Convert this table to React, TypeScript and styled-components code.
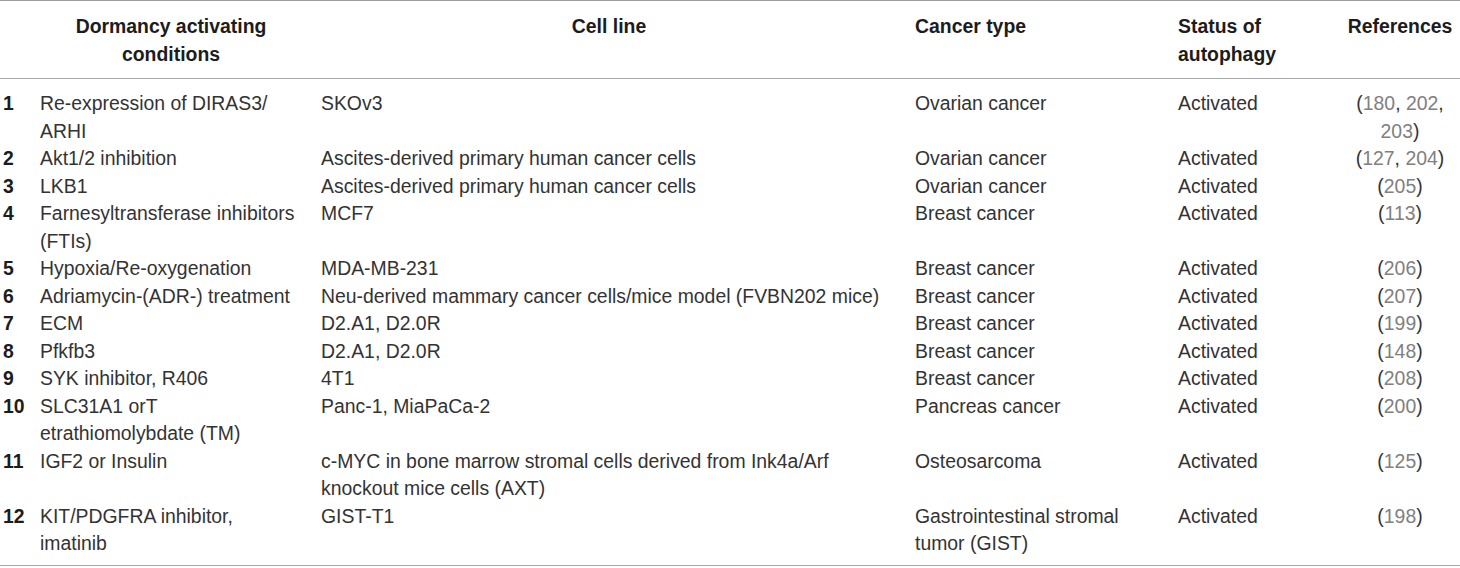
import React from "react";
import styled, { createGlobalStyle } from "styled-components";

const Global = createGlobalStyle`
  html, body { margin: 0; padding: 0; background: #ffffff; }
  body { font-family: "Liberation Sans", Arial, sans-serif; }
`;

const Table = styled.table`
  width: 1460px;
  border-collapse: collapse;
  table-layout: fixed;
  font-family: "Liberation Sans", Arial, sans-serif;
  font-size: 19.4px;
  line-height: 27.5px;
  color: #333333;
  border-top: 1px solid #9c9c9c;
  border-bottom: 1.5px solid #a8a8a8;
`;

const Head = styled.thead`
  border-bottom: 1.5px solid #a8a8a8;
`;

type Align = "left" | "center";

const Th = styled.th<{ $align?: Align; $pl?: number; $pr?: number }>`
  font-weight: 700;
  color: #1c1c1c;
  vertical-align: top;
  text-align: ${(p) => p.$align ?? "left"};
  padding: 12px ${(p) => p.$pr ?? 0}px 10px ${(p) => p.$pl ?? 0}px;
`;

const Body = styled.tbody`
  tr:first-child td { padding-top: 11px; }
  tr:last-child td { padding-bottom: 7px; }
`;

const Td = styled.td<{ $align?: Align; $pl?: number; $pr?: number }>`
  vertical-align: top;
  text-align: ${(p) => p.$align ?? "left"};
  padding: 0 ${(p) => p.$pr ?? 0}px 0 ${(p) => p.$pl ?? 0}px;
`;

const Num = styled(Td)`
  font-weight: 700;
  color: #1c1c1c;
`;

const RefNum = styled.span`
  color: #808080;
`;

type Row = {
  cond: React.ReactNode;
  cell: string;
  cancer: string;
  refs: string[];
};

const rows: Row[] = [
  { cond: <>Re-expression of DIRAS3/<wbr />ARHI</>, cell: "SKOv3", cancer: "Ovarian cancer", refs: ["180", "202", "203"] },
  { cond: "Akt1/2 inhibition", cell: "Ascites-derived primary human cancer cells", cancer: "Ovarian cancer", refs: ["127", "204"] },
  { cond: "LKB1", cell: "Ascites-derived primary human cancer cells", cancer: "Ovarian cancer", refs: ["205"] },
  { cond: "Farnesyltransferase inhibitors (FTIs)", cell: "MCF7", cancer: "Breast cancer", refs: ["113"] },
  { cond: "Hypoxia/Re-oxygenation", cell: "MDA-MB-231", cancer: "Breast cancer", refs: ["206"] },
  { cond: "Adriamycin-(ADR-) treatment", cell: "Neu-derived mammary cancer cells/mice model (FVBN202 mice)", cancer: "Breast cancer", refs: ["207"] },
  { cond: "ECM", cell: "D2.A1, D2.0R", cancer: "Breast cancer", refs: ["199"] },
  { cond: "Pfkfb3", cell: "D2.A1, D2.0R", cancer: "Breast cancer", refs: ["148"] },
  { cond: "SYK inhibitor, R406", cell: "4T1", cancer: "Breast cancer", refs: ["208"] },
  { cond: "SLC31A1 orT etrathiomolybdate (TM)", cell: "Panc-1, MiaPaCa-2", cancer: "Pancreas cancer", refs: ["200"] },
  { cond: "IGF2 or Insulin", cell: "c-MYC in bone marrow stromal cells derived from Ink4a/Arf knockout mice cells (AXT)", cancer: "Osteosarcoma", refs: ["125"] },
  { cond: "KIT/PDGFRA inhibitor, imatinib", cell: "GIST-T1", cancer: "Gastrointestinal stromal tumor (GIST)", refs: ["198"] },
];

const Refs: React.FC<{ refs: string[] }> = ({ refs }) => (
  <>
    (
    {refs.map((r, i) => (
      <React.Fragment key={r}>
        <RefNum>{r}</RefNum>
        {i < refs.length - 1 ? ", " : ""}
      </React.Fragment>
    ))}
    )
  </>
);

export default function App() {
  return (
    <>
      <Global />
      <Table>
        <colgroup>
          <col style={{ width: 40 }} />
          <col style={{ width: 281 }} />
          <col style={{ width: 594 }} />
          <col style={{ width: 263 }} />
          <col style={{ width: 162 }} />
          <col style={{ width: 120 }} />
        </colgroup>
        <Head>
          <tr>
            <Th $pl={3} />
            <Th $align="center" $pr={19}>Dormancy activating conditions</Th>
            <Th $align="center" $pr={18}>Cell line</Th>
            <Th $pr={20}>Cancer type</Th>
            <Th $pr={10}>Status of autophagy</Th>
            <Th $align="center" $pl={5} $pr={5}>References</Th>
          </tr>
        </Head>
        <Body>
          {rows.map((r, i) => (
            <tr key={i}>
              <Num $pl={3}>{i + 1}</Num>
              <Td $pr={19}>{r.cond}</Td>
              <Td $pr={18}>{r.cell}</Td>
              <Td $pr={20}>{r.cancer}</Td>
              <Td $pr={10}>Activated</Td>
              <Td $align="center" $pl={5} $pr={5}>
                <Refs refs={r.refs} />
              </Td>
            </tr>
          ))}
        </Body>
      </Table>
    </>
  );
}
